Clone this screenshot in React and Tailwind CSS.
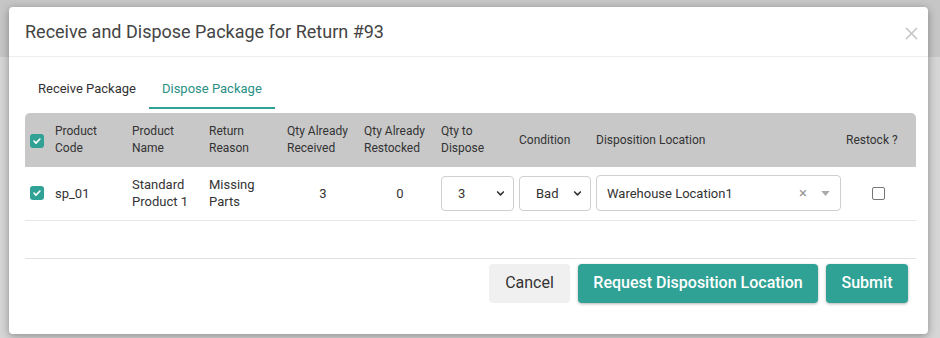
import React, { useState } from 'react';

const teal = 'bg-[#2fa295]';

const Check = ({ checked }) =>
  checked ? (
    <span className="inline-flex h-[14px] w-[14px] items-center justify-center rounded-[3px] bg-[#2fa295]">
      <svg viewBox="0 0 12 12" className="h-[10px] w-[10px]">
        <path d="M2.5 6.2l2.3 2.3 4.7-4.9" fill="none" stroke="#fff" strokeWidth="1.9" strokeLinecap="round" strokeLinejoin="round" />
      </svg>
    </span>
  ) : (
    <span className="inline-block h-[13px] w-[13px] rounded-[2px] border border-[#767676] bg-white" />
  );

const Chevron = () => (
  <svg viewBox="0 0 10 10" className="h-[9px] w-[9px]">
    <path d="M1.8 3.3L5 6.5l3.2-3.2" fill="none" stroke="#333" strokeWidth="1.8" strokeLinecap="round" strokeLinejoin="round" />
  </svg>
);

const SelectBox = ({ value, className }) => (
  <div className={`flex h-[35px] items-center justify-between rounded-[4px] border border-[#cfcfcf] bg-white pl-[16px] pr-[8px] text-[13px] text-[#333] ${className}`}>
    <span>{value}</span>
    <Chevron />
  </div>
);

const cols = [
  { w: 'w-[25px]' },
  { w: 'w-[77px]', label: ['Product', 'Code'] },
  { w: 'w-[77px]', label: ['Product', 'Name'] },
  { w: 'w-[78px]', label: ['Return', 'Reason'] },
  { w: 'w-[77px]', label: ['Qty Already', 'Received'] },
  { w: 'w-[77px]', label: ['Qty Already', 'Restocked'] },
  { w: 'w-[78px]', label: ['Qty to', 'Dispose'] },
  { w: 'w-[77px]', label: ['Condition'] },
  { w: 'w-[250px]', label: ['Disposition Location'] },
  { w: 'w-[75px]', label: ['Restock ?'] },
];

export default function App() {
  const [tab] = useState('dispose');

  return (
    <div className="relative h-[338px] w-[940px] overflow-hidden bg-[#d6d6d6]" style={{ fontFamily: 'Roboto, "Noto Sans", sans-serif' }}>
      <div className="h-[57px] bg-[#c6c6c6]" />
      <div className="absolute left-[9px] top-[7px] flex h-[327px] w-[919px] flex-col rounded-[4px] bg-white shadow-[0_2px_8px_rgba(0,0,0,0.35)]">
        <div className="flex h-[50px] items-center justify-between border-b border-[#eeeeee] pl-[16px] pr-[10px]">
          <h2 className="text-[18px] font-normal text-[#444]">Receive and Dispose Package for Return #93</h2>
          <svg viewBox="0 0 14 14" className="mt-[4px] h-[13px] w-[13px]">
            <path d="M1.5 1.5l11 11M12.5 1.5l-11 11" stroke="#c8c8c8" strokeWidth="1.6" strokeLinecap="round" />
          </svg>
        </div>

        <div className="flex flex-1 flex-col pl-[16px] pr-[12px]">
          <div className="mt-[14px] flex h-[38px] text-[13px]">
            <div className={`flex items-center px-[13px] pb-[2px] ${tab === 'receive' ? 'border-b-2 border-[#2fa295] text-[#2a8f84]' : 'text-[#333]'}`}>
              Receive Package
            </div>
            <div className={`flex items-center px-[13px] ${tab === 'dispose' ? 'border-b-2 border-[#2fa295] text-[#2a8f84]' : 'text-[#333]'}`}>
              Dispose Package
            </div>
          </div>

          <table className="mt-[4px] w-[891px] table-fixed border-collapse text-[12px] text-[#333]">
            <thead>
              <tr className="h-[54px] bg-[#c8c8c8]">
                {cols.map((c, i) => (
                  <th
                    key={i}
                    className={`${c.w} p-0 pl-[5px] text-left align-middle font-normal leading-[17px] ${i === 0 ? 'rounded-tl-[5px]' : ''} ${i === cols.length - 1 ? 'rounded-tr-[5px]' : ''}`}
                  >
                    {i === 0 ? (
                      <span className="flex pt-[2px]"><Check checked /></span>
                    ) : (
                      c.label.map((l) => <div key={l}>{l}</div>)
                    )}
                  </th>
                ))}
              </tr>
            </thead>
            <tbody>
              <tr className="h-[53px] border-b border-[#e6e6e6] text-[13px] leading-[17px]">
                <td className="pl-[5px]"><span className="flex"><Check checked /></span></td>
                <td className="pl-[5px]">sp_01</td>
                <td className="pl-[5px]">Standard<br />Product 1</td>
                <td className="pl-[5px]">Missing<br />Parts</td>
                <td className="pl-[5px] text-center">3</td>
                <td className="pl-[5px] text-center">0</td>
                <td className="pl-[5px]"><SelectBox value="3" className="w-[73px]" /></td>
                <td className="pl-[5px]"><SelectBox value="Bad" className="w-[72px]" /></td>
                <td className="pl-[5px]">
                  <div className="flex h-[36px] w-[245px] items-center rounded-[4px] border border-[#cfcfcf] bg-white pl-[10px] pr-[10px] text-[13px] text-[#333]">
                    <span className="flex-1">Warehouse Location1</span>
                    <span className="mr-[14px] text-[15px] leading-none text-[#999]">×</span>
                    <svg viewBox="0 0 10 6" className="h-[5px] w-[9px]">
                      <path d="M0 0h10L5 6z" fill="#aaa" />
                    </svg>
                  </div>
                </td>
                <td className="pl-[5px]">
                  <span className="ml-[26px] flex"><Check /></span>
                </td>
              </tr>
            </tbody>
          </table>

          <div className="mt-[37px] w-[891px] border-t border-[#e2e2e2]" />

          <div className="mt-[5px] flex w-[883px] justify-end gap-[8px]">
            <button className="h-[39px] w-[81px] rounded-[4px] bg-[#f0f0f0] text-[16px] text-[#333]">Cancel</button>
            <button className={`h-[39px] w-[240px] rounded-[4px] ${teal} text-[16px] font-medium text-white shadow-[0_1px_3px_rgba(0,0,0,0.3)]`}>
              Request Disposition Location
            </button>
            <button className={`h-[39px] w-[82px] rounded-[4px] ${teal} text-[16px] font-medium text-white shadow-[0_1px_3px_rgba(0,0,0,0.3)]`}>
              Submit
            </button>
          </div>
        </div>
      </div>
    </div>
  );
}
